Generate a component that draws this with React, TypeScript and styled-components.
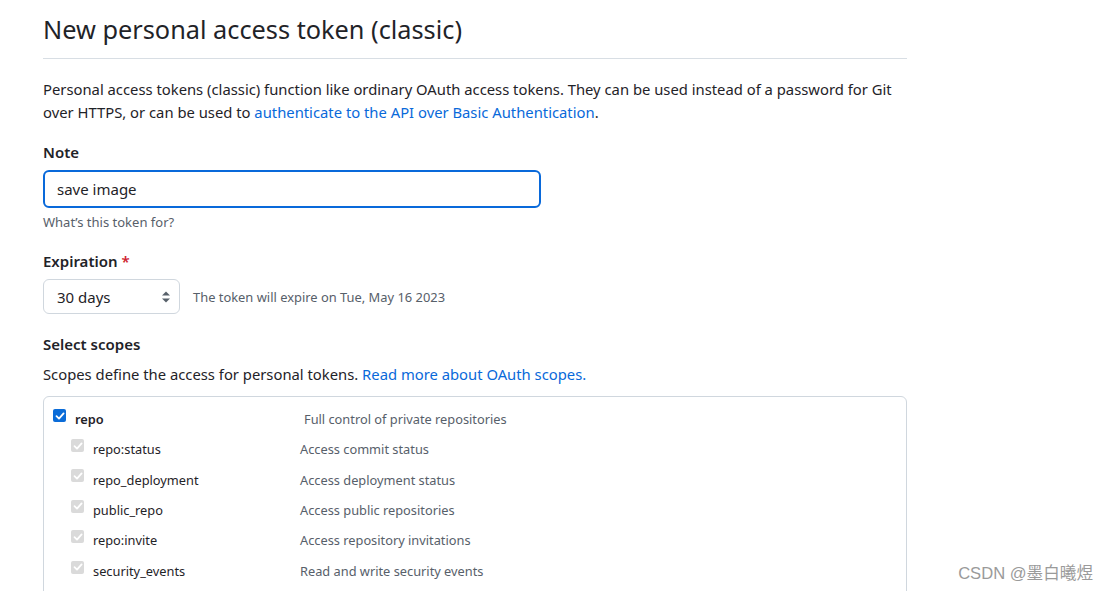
import React from "react";
import styled, { createGlobalStyle } from "styled-components";

const Global = createGlobalStyle`
  html, body { margin: 0; padding: 0; background: #ffffff; }
  body { font-family: "Noto Sans", "Noto Sans CJK SC", sans-serif; color: #1f2328; }
`;

const Page = styled.div`
  width: 1109px;
  height: 591px;
  overflow: hidden;
  position: relative;
  box-sizing: border-box;
  padding: 11px 0 0 43px;
`;

const Column = styled.div`
  width: 864px;
  display: flex;
  flex-direction: column;
`;

const Subhead = styled.h1`
  margin: 0;
  font-size: 25.3px;
  font-weight: 400;
  line-height: 36px;
  padding-bottom: 11px;
  border-bottom: 1px solid #d8dee4;
`;

const Lead = styled.p`
  margin: 19px 0 0;
  font-size: 14.8px;
  line-height: 23px;
`;

const Link = styled.a`
  color: #0969da;
  text-decoration: none;
`;

const Label = styled.div<{ $mt: number }>`
  font-size: 15px;
  font-weight: 600;
  line-height: 22px;
  margin-top: ${(p) => p.$mt}px;
`;

const Req = styled.span`
  color: #cf222e;
  margin-left: 4px;
`;

const TextInput = styled.div`
  margin-top: 7px;
  width: 498px;
  height: 38px;
  box-sizing: border-box;
  border: 2px solid #0969da;
  border-radius: 6px;
  display: flex;
  align-items: center;
  padding-left: 12px;
  font-size: 15px;
`;

const Note = styled.div`
  margin-top: 4px;
  font-size: 13px;
  line-height: 20px;
  color: #57606a;
`;

const SelectRow = styled.div`
  margin-top: 7px;
  display: flex;
  align-items: center;
  gap: 13px;
`;

const Select = styled.div`
  width: 137px;
  height: 35px;
  box-sizing: border-box;
  border: 1px solid #d0d7de;
  border-radius: 6px;
  background: #ffffff;
  display: flex;
  align-items: center;
  justify-content: space-between;
  padding: 0 8px 0 13px;
  font-size: 15px;
`;

const Hint = styled.span`
  font-size: 12.9px;
  color: #57606a;
`;

const Desc = styled.p`
  margin: 8px 0 0;
  font-size: 14.8px;
  line-height: 23px;
`;

const ScopeBox = styled.div`
  margin-top: 10px;
  border: 1px solid #d0d7de;
  border-radius: 6px;
  padding: 12px 0 20px 9px;
  height: 260px;
`;

const Row = styled.div<{ $sub?: boolean }>`
  display: grid;
  grid-template-columns: ${(p) => (p.$sub ? "22px 207px 1fr" : "22px 229px 1fr")};
  align-items: center;
  height: ${(p) => (p.$sub ? "30.4px" : "20px")};
  padding-left: ${(p) => (p.$sub ? "18px" : "0")};
  font-size: 12.8px;
`;

const SubList = styled.div`
  margin-top: 5px;
  display: flex;
  flex-direction: column;
`;

const Box = styled.span<{ $on?: boolean }>`
  width: 13px;
  height: 13px;
  border-radius: 2px;
  background: ${(p) => (p.$on ? "#0b6cd8" : "#dadada")};
  display: inline-flex;
  align-items: center;
  justify-content: center;
  align-self: start;
  margin-top: ${(p) => (p.$on ? "0" : "5px")};
`;

const Name = styled.span<{ $bold?: boolean }>`
  font-weight: ${(p) => (p.$bold ? 600 : 400)};
  color: #1f2328;
`;

const ScopeDesc = styled.span`
  color: #57606a;
`;

const Watermark = styled.div`
  position: absolute;
  right: 16px;
  bottom: 7px;
  font-family: "Liberation Sans", "Noto Sans CJK SC", sans-serif;
  font-size: 16.6px;
  color: #9a9a9a;
`;

const Check = () => (
  <svg width="10" height="10" viewBox="0 0 10 10">
    <path d="M1.5 5.2 L4 7.6 L8.6 2.4" fill="none" stroke="#fff" strokeWidth="1.8" strokeLinecap="round" strokeLinejoin="round" />
  </svg>
);

const Arrows = () => (
  <svg width="10" height="14" viewBox="0 0 10 14">
    <path d="M5 1.5 L9 5.5 H1 Z" fill="#57606a" />
    <path d="M5 12.5 L9 8.5 H1 Z" fill="#57606a" />
  </svg>
);

const subs = [
  ["repo:status", "Access commit status"],
  ["repo_deployment", "Access deployment status"],
  ["public_repo", "Access public repositories"],
  ["repo:invite", "Access repository invitations"],
  ["security_events", "Read and write security events"],
];

export default function App() {
  return (
    <>
      <Global />
      <Page>
        <Column>
          <Subhead>New personal access token (classic)</Subhead>
          <Lead>
            Personal access tokens (classic) function like ordinary OAuth access tokens. They can be used instead of a password for Git
            over HTTPS, or can be used to <Link>authenticate to the API over Basic Authentication</Link>.
          </Lead>
          <Label $mt={17}>Note</Label>
          <TextInput>save image</TextInput>
          <Note>What’s this token for?</Note>
          <Label $mt={18}>
            Expiration<Req>*</Req>
          </Label>
          <SelectRow>
            <Select>
              30 days
              <Arrows />
            </Select>
            <Hint>The token will expire on Tue, May 16 2023</Hint>
          </SelectRow>
          <Label $mt={19}>Select scopes</Label>
          <Desc>
            Scopes define the access for personal tokens. <Link>Read more about OAuth scopes.</Link>
          </Desc>
          <ScopeBox>
            <Row>
              <Box $on>
                <Check />
              </Box>
              <Name $bold>repo</Name>
              <ScopeDesc>Full control of private repositories</ScopeDesc>
            </Row>
            <SubList>
              {subs.map(([n, d]) => (
                <Row $sub key={n}>
                  <Box>
                    <Check />
                  </Box>
                  <Name>{n}</Name>
                  <ScopeDesc>{d}</ScopeDesc>
                </Row>
              ))}
            </SubList>
          </ScopeBox>
        </Column>
        <Watermark>CSDN @墨白曦煜</Watermark>
      </Page>
    </>
  );
}
